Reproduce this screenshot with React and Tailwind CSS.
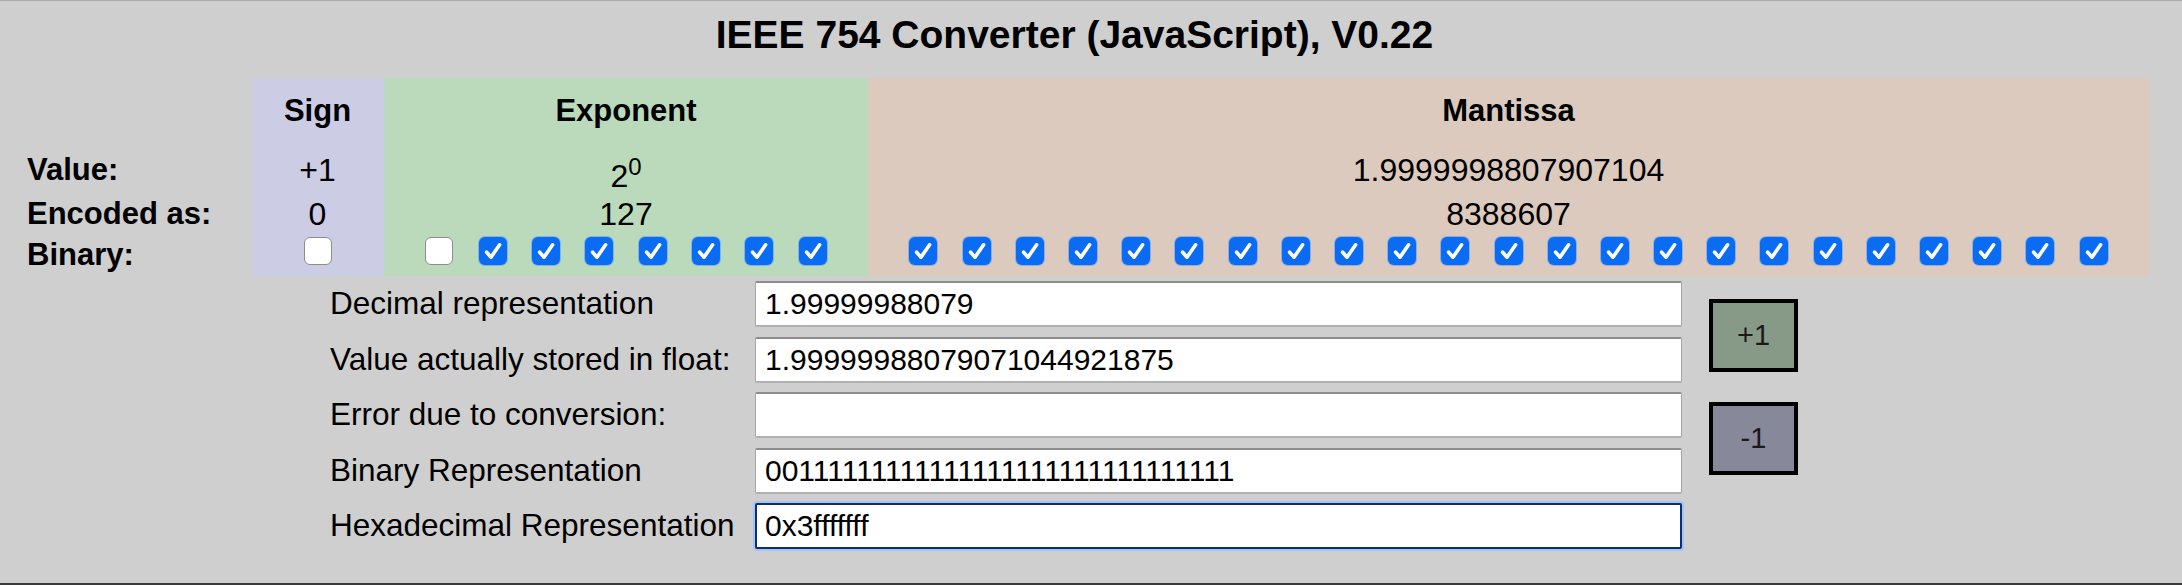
import { Fragment } from "react";

const EXPONENT_BITS = [false, true, true, true, true, true, true, true];
const MANTISSA_BITS = Array.from({ length: 23 }, () => true);

const FIELDS = [
  ["Decimal representation", "1.99999988079", false],
  ["Value actually stored in float:", "1.99999988079071044921875", false],
  ["Error due to conversion:", "", false],
  ["Binary Representation", "00111111111111111111111111111111", false],
  ["Hexadecimal Representation", "0x3fffffff", true],
];

function Bit({ checked }) {
  if (!checked) {
    return (
      <span className="block w-[28px] h-[28px] shrink-0 rounded-[6px] bg-white border-[1.5px] border-[#8d8d8d]" />
    );
  }
  return (
    <span className="block w-[28px] h-[28px] shrink-0 rounded-[6px] bg-[#0a6cf3] shadow-[0_0_0_1px_rgba(90,155,250,0.6)]">
      <svg width="28" height="28" viewBox="0 0 28 28">
        <path
          d="M7.6 15.2 L12 20.2 L20.6 7.8"
          fill="none"
          stroke="white"
          strokeWidth="3.6"
          strokeLinecap="round"
          strokeLinejoin="round"
        />
      </svg>
    </span>
  );
}

export default function App() {
  return (
    <div className="w-[2182px] h-[585px] flex flex-col bg-[#cfcfcf] border-t border-[#a9a9a9] border-b-2 border-b-[#3a3a3a] text-black font-['Liberation_Sans',Arial,sans-serif]">
      <div className="w-[2149px] h-[66px] flex items-center justify-center">
        <h1 className="text-[39px] font-bold leading-none">
          IEEE 754 Converter (JavaScript), V0.22
        </h1>
      </div>

      <div className="mt-[11px] grid grid-cols-[251px_133px_484px_1281px] grid-rows-[65px_53px_35px_45px] text-[32px] leading-none">
        {/* header */}
        <div />
        <div className="flex items-center justify-center bg-[#ccccE4] font-bold text-[31px]">Sign</div>
        <div className="flex items-center justify-center bg-[#bbdabb] font-bold text-[31px]">Exponent</div>
        <div className="flex items-center justify-center bg-[#dbcabd] font-bold text-[31px]">Mantissa</div>

        {/* value */}
        <div className="flex items-center pl-[27px] font-bold text-[31px]">Value:</div>
        <div className="flex items-center justify-center bg-[#ccccE4]">+1</div>
        <div className="flex items-center justify-center bg-[#bbdabb] pt-[12px]">
          <span>
            2<sup className="text-[24px]">0</sup>
          </span>
        </div>
        <div className="flex items-center justify-center bg-[#dbcabd]">1.9999998807907104</div>

        {/* encoded */}
        <div className="flex items-center pl-[27px] font-bold text-[31px]">Encoded as:</div>
        <div className="flex items-center justify-center bg-[#ccccE4]">0</div>
        <div className="flex items-center justify-center bg-[#bbdabb]">127</div>
        <div className="flex items-center justify-center bg-[#dbcabd]">8388607</div>

        {/* binary */}
        <div className="flex items-start pt-[8px] pl-[27px] font-bold text-[31px]">Binary:</div>
        <div className="flex items-start justify-center pt-[6px] bg-[#ccccE4]">
          <Bit checked={false} />
        </div>
        <div className="flex items-start justify-center gap-[25.3px] pt-[6px] bg-[#bbdabb]">
          {EXPONENT_BITS.map((b, i) => (
            <Bit key={i} checked={b} />
          ))}
        </div>
        <div className="flex items-start justify-center gap-[25.2px] pt-[6px] bg-[#dbcabd]">
          {MANTISSA_BITS.map((b, i) => (
            <Bit key={i} checked={b} />
          ))}
        </div>
      </div>

      <div className="flex mt-[5px] pl-[330px]">
        <div className="grid grid-cols-[425px_927px] gap-y-[9.5px]">
          {FIELDS.map(([label, value, focused]) => (
            <Fragment key={label}>
              <div className="h-[46px] flex items-center text-[31.5px] whitespace-nowrap">{label}</div>
              <input
                readOnly
                value={value}
                className={
                  focused
                    ? "h-[46px] w-[927px] bg-white pl-[8px] text-[30px] rounded-[2px] border-2 border-[#102c72] shadow-[0_0_0_2px_rgba(150,195,255,0.8)] outline-none"
                    : "h-[46px] w-[927px] bg-white pl-[9px] text-[30px] rounded-[2px] border border-[#a6a6a6] border-t-2 border-t-[#8e8e8e] border-b-2 border-b-[#b0b0b0] outline-none"
                }
              />
            </Fragment>
          ))}
        </div>
        <div className="flex flex-col pl-[27px] pt-[18px] gap-[30px]">
          <button className="w-[89px] h-[73px] border-4 border-black bg-[#879a88] text-[29px] text-[#1a1a1a]">
            +1
          </button>
          <button className="w-[89px] h-[73px] border-4 border-black bg-[#878899] text-[29px] text-[#1a1a1a]">
            -1
          </button>
        </div>
      </div>
    </div>
  );
}
